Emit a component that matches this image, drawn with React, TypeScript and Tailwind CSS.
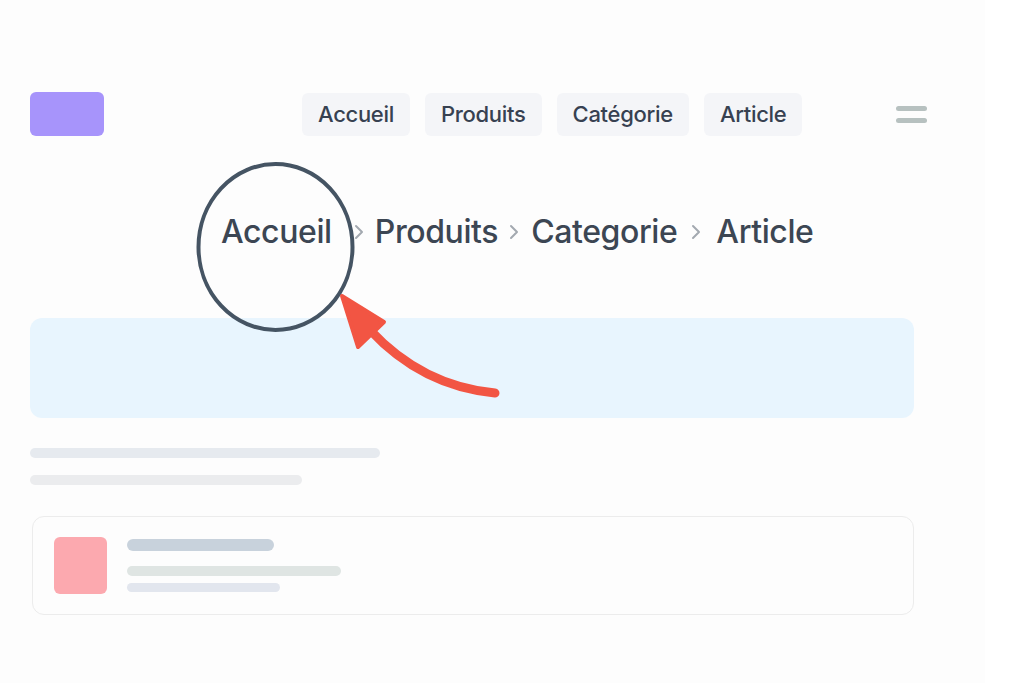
import React from 'react';

const navItems = ['Accueil', 'Produits', 'Catégorie', 'Article']
const crumbs = ['Accueil', 'Produits', 'Categorie', 'Article']

// spacing around each chevron, measured from the mockup
const chevronGaps = ['', 'ml-[22px] mr-[11px]', 'ml-[11px] mr-[12px]', 'ml-[14px] mr-[15px]']

function Chevron() {
    return (
        <svg width="10" height="16" viewBox="0 0 10 16" className="shrink-0">
            <polyline points="2,2 8,8 2,14" fill="none" stroke="#a3a9b0" strokeWidth="2" strokeLinecap="round" strokeLinejoin="round" />
        </svg>
    )
}

export default function App() {
    return (
        <div className="relative w-[1024px] h-[683px] overflow-hidden bg-white" style={{ fontFamily: 'Inter, "Liberation Sans", sans-serif' }}>
            <div className="pt-[92px] pl-[30px] w-[985px] h-full bg-[#fdfdfd]">
                {/* top bar */}
                <div className="flex items-center w-[897px] h-[44px]">
                    <div className="w-[74px] h-[44px] rounded-md bg-[#a794fb]" />
                    <div className="flex gap-[15px] ml-[198px]">
                        {navItems.map((item) => (
                            <div key={item} className="h-[43px] px-4 flex items-center rounded-md bg-[#f4f5f8] text-[22px] font-medium tracking-[-0.3px] text-[#374151]">
                                {item}
                            </div>
                        ))}
                    </div>
                    <div className="ml-auto flex flex-col gap-[7px]">
                        <div className="w-[31px] h-[5px] rounded-full bg-[#b7c1c0]" />
                        <div className="w-[31px] h-[5px] rounded-full bg-[#b7c1c0]" />
                    </div>
                </div>

                {/* breadcrumb */}
                <div className="flex items-center h-[44px] mt-[74px] ml-[191px] text-[32px] font-medium tracking-[-0.4px] text-[#3c4653]">
                    {crumbs.map((c, i) => (
                        <React.Fragment key={c}>
                            {i > 0 && (
                                <span className={chevronGaps[i]}>
                                    <Chevron />
                                </span>
                            )}
                            <span>{c}</span>
                        </React.Fragment>
                    ))}
                </div>

                {/* banner */}
                <div className="mt-[64px] w-[884px] h-[100px] rounded-xl bg-[#e8f5fe]" />

                {/* text lines */}
                <div className="mt-[30px] w-[350px] h-[10px] rounded-full bg-[#e6eaef]" />
                <div className="mt-[17px] w-[272px] h-[10px] rounded-full bg-[#ebecee]" />

                {/* card */}
                <div className="mt-[31px] ml-[2px] w-[882px] h-[99px] rounded-xl border border-[#ececec] flex items-center gap-[20px] pl-[21px]">
                    <div className="w-[53px] h-[57px] rounded-md bg-[#fca9af]" />
                    <div className="flex flex-col">
                        <div className="w-[147px] h-[12px] rounded-full bg-[#c8d2dc]" />
                        <div className="mt-[15px] w-[214px] h-[10px] rounded-full bg-[#dfe5e3]" />
                        <div className="mt-[7px] w-[153px] h-[9px] rounded-full bg-[#e2e6ee]" />
                    </div>
                </div>
            </div>

            {/* annotation overlay */}
            <svg className="absolute inset-0 pointer-events-none" width="1024" height="683">
                <ellipse cx="275.5" cy="247" rx="77" ry="83" fill="none" stroke="#455463" strokeWidth="4" />
                <path d="M 495 393 Q 422 386 370 330" fill="none" stroke="#f25543" strokeWidth="9" strokeLinecap="round" />
                <polygon points="342,296 384,322 358,347" fill="#f25543" stroke="#f25543" strokeWidth="4" strokeLinejoin="round" />
            </svg>
        </div>
    )
}
